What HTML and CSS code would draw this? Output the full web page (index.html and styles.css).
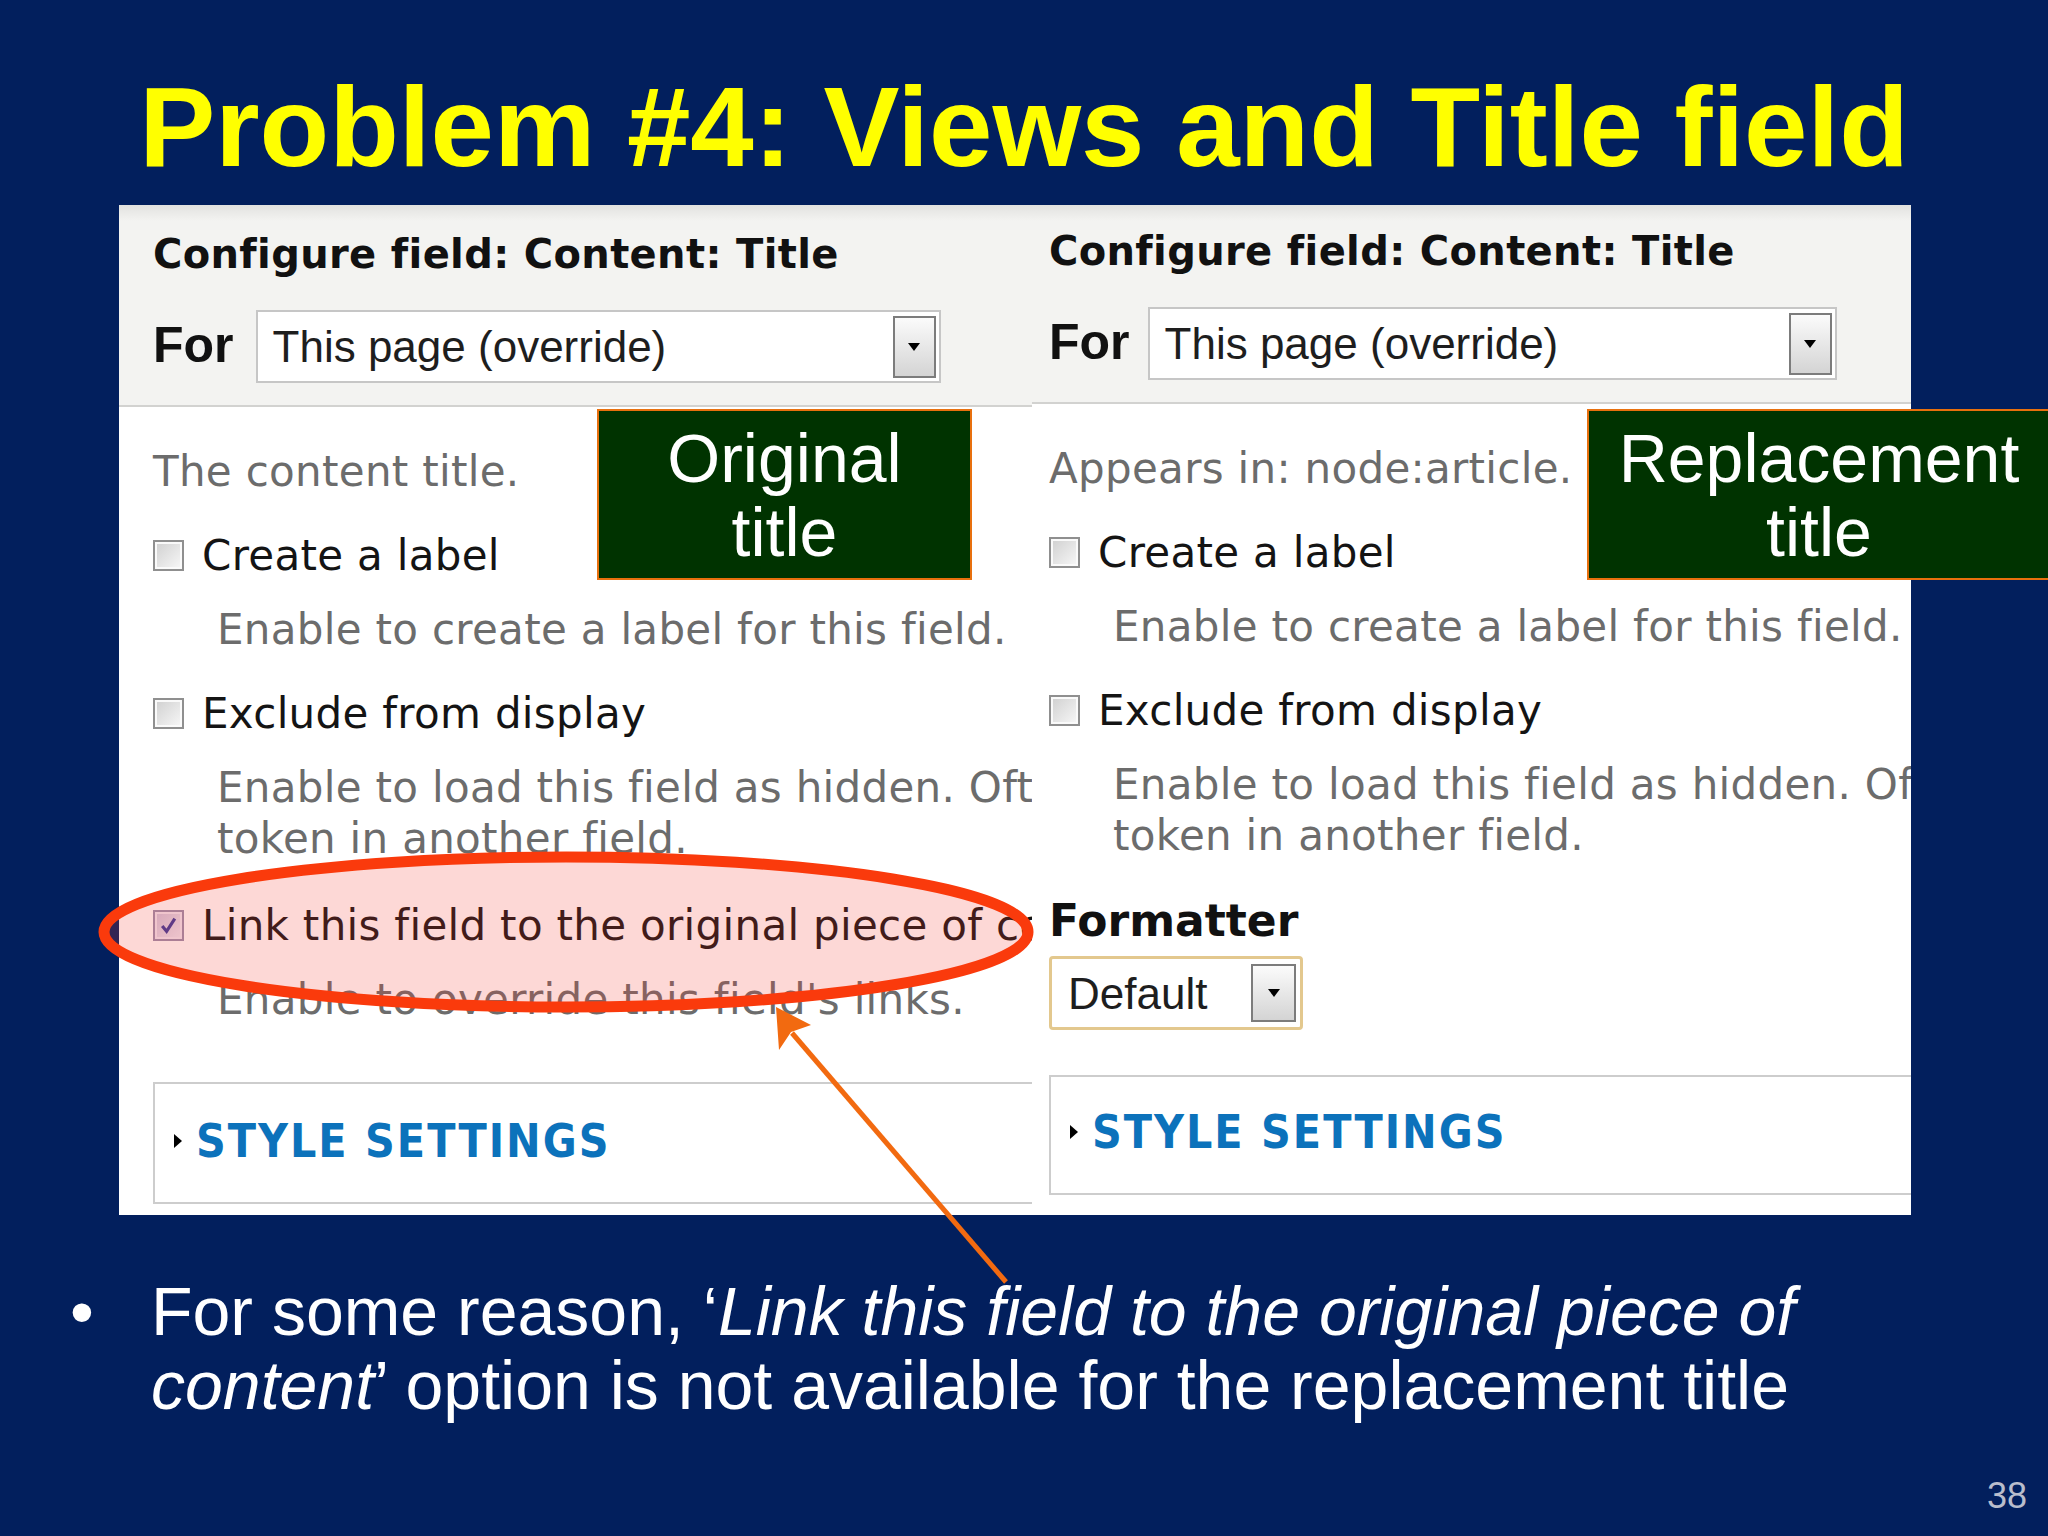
FILE: index.html
```html
<!DOCTYPE html>
<html lang="en">
<head>
<meta charset="utf-8">
<title>Problem #4: Views and Title field</title>
<link rel="stylesheet" href="styles.css">
</head>
<body>
<div class="slide">
  <h1 class="title">Problem #4: Views and Title field</h1>

  <div class="shot">
    <section class="col col-left">
      <header class="cfg-head">
        <div class="cfg-title">Configure field: Content: Title</div>
        <div class="for-row">
          <span class="for-label">For</span>
          <div class="select select-for">
            <span class="select-text">This page (override)</span>
            <span class="select-btn"><i class="tri-down"></i></span>
          </div>
        </div>
      </header>
      <div class="cfg-body">
        <p class="desc desc-first">The content title.</p>
        <div class="check-row"><span class="cb"></span><span>Create a label</span></div>
        <p class="desc desc-indent">Enable to create a label for this field.</p>
        <div class="check-row"><span class="cb"></span><span>Exclude from display</span></div>
        <p class="desc desc-indent">Enable to load this field as hidden. Often used to group fields, or to use as a<br>token in another field.</p>
        <div class="check-row check-link">
          <span class="cb cb-checked"><svg class="tick" viewBox="0 0 20 20"><path d="M4 10.5 L8.2 15.5 L16 3.5" fill="none" stroke="#3a3a9c" stroke-width="3"/></svg></span>
          <span>Link this field to the original piece of content</span>
        </div>
        <p class="desc desc-indent">Enable to override this field's links.</p>
        <div class="style-box"><i class="tri-right"></i><span class="style-text">STYLE SETTINGS</span></div>
      </div>
    </section>

    <section class="col col-right">
      <header class="cfg-head">
        <div class="cfg-title">Configure field: Content: Title</div>
        <div class="for-row">
          <span class="for-label">For</span>
          <div class="select select-for">
            <span class="select-text">This page (override)</span>
            <span class="select-btn"><i class="tri-down"></i></span>
          </div>
        </div>
      </header>
      <div class="cfg-body">
        <p class="desc desc-first">Appears in: node:article.</p>
        <div class="check-row"><span class="cb"></span><span>Create a label</span></div>
        <p class="desc desc-indent">Enable to create a label for this field.</p>
        <div class="check-row"><span class="cb"></span><span>Exclude from display</span></div>
        <p class="desc desc-indent">Enable to load this field as hidden. Often used to group fields, or to use as a<br>token in another field.</p>
        <div class="fmt-label">Formatter</div>
        <div class="select select-fmt">
          <span class="select-text">Default</span>
          <span class="select-btn select-btn-fmt"><i class="tri-down"></i></span>
        </div>
        <div class="style-box style-box-right"><i class="tri-right"></i><span class="style-text">STYLE SETTINGS</span></div>
      </div>
    </section>
  </div>

  <div class="callout callout-orig">Original<br>title</div>
  <div class="callout callout-repl">Replacement<br>title</div>

  <svg class="annot" width="2048" height="1536" viewBox="0 0 2048 1536">
    <ellipse cx="566" cy="932" rx="462" ry="75" fill="rgba(245,60,50,0.2)" stroke="#fa3a0c" stroke-width="11"/>
    <line x1="1006" y1="1282" x2="792" y2="1033" stroke="#f26a10" stroke-width="5"/>
    <polygon points="776,1007 811,1025 791,1032 779,1050" fill="#f26a10"/>
  </svg>

  <ul class="bullets">
    <li>For some reason, ‘<em>Link this field to the original piece of<br>content</em>’ option is not available for the replacement title</li>
  </ul>

  <div class="page-num">38</div>
</div>
</body>
</html>
```

FILE: styles.css
```css
* { box-sizing: border-box; }

html, body {
  margin: 0;
  padding: 0;
}

body {
  width: 2048px;
  height: 1536px;
  overflow: hidden;
  background: #021f5d;
  font-family: "Liberation Sans", Arial, sans-serif;
}

.slide {
  position: relative;
  width: 2048px;
  height: 1536px;
  overflow: hidden;
  display: flex;
  flex-direction: column;
  padding-top: 62px;
  background: #021f5d;
}

.title {
  margin: 0;
  font: bold 114px/130px "Liberation Sans", Arial, sans-serif;
  color: #ffff00;
  text-align: center;
  white-space: nowrap;
}

/* ---------- screenshot panel ---------- */
.shot {
  margin: 13px 0 0 119px;
  width: 1792px;
  height: 1010px;
  flex: none;
  display: flex;
  background: #fff;
}

.col {
  height: 100%;
  overflow: hidden;
  background: #fff;
  font-family: "DejaVu Sans", Verdana, sans-serif;
}

.col-left { width: 913px; }
.col-right { width: 879px; }

.cfg-head {
  height: 202px;
  padding: 25px 0 0 34px;
  background: linear-gradient(#e2e2e0, #f3f3f1 16px);
  border-bottom: 2px solid #d2d2d0;
}

.col-right .cfg-head {
  height: 199px;
  padding: 22px 0 0 17px;
}

.cfg-title {
  font-weight: bold;
  font-size: 40px;
  line-height: 48px;
  letter-spacing: 0.35px;
  color: #111;
  white-space: nowrap;
}

.for-row {
  display: flex;
  align-items: baseline;
  gap: 22px;
  margin-top: 32px;
}

.col-right .for-row { gap: 18px; }

.for-label {
  font: bold 50px/50px "Liberation Sans", Arial, sans-serif;
  color: #111;
}

.select {
  display: flex;
  align-items: center;
  justify-content: space-between;
  background: #fff;
  font: 44px/69px "Liberation Sans", Arial, sans-serif;
  color: #1e1e1e;
  white-space: nowrap;
}

.select-for {
  width: 685px;
  height: 73px;
  border: 2px solid #c6c6c6;
  padding: 0 3px 0 15px;
}

.col-right .select-for { width: 689px; }

.select-btn {
  flex: none;
  width: 43px;
  height: 62px;
  border: 2px solid #7c7c7c;
  background: linear-gradient(#fbfbfb, #d4d4d4);
  display: flex;
  align-items: center;
  justify-content: center;
}

.tri-down {
  display: block;
  width: 0;
  height: 0;
  border-left: 6px solid transparent;
  border-right: 6px solid transparent;
  border-top: 8px solid #000;
}

.cfg-body { padding-left: 34px; }
.col-right .cfg-body { padding-left: 17px; }

.desc {
  margin: 0;
  font-size: 42px;
  line-height: 51px;
  letter-spacing: 0.3px;
  color: #6c6c6c;
  white-space: nowrap;
}

.desc-first { margin-top: 39px; }

.desc-indent {
  margin-left: 64px;
  margin-top: 23px;
}

.check-row {
  display: flex;
  align-items: center;
  gap: 18px;
  margin-top: 33px;
  font-size: 42px;
  line-height: 51px;
  letter-spacing: 0.3px;
  color: #141414;
  white-space: nowrap;
}

.check-link { margin-top: 36px; }

.cb {
  flex: none;
  width: 31px;
  height: 31px;
  border: 2px solid #8f8f8f;
  box-shadow: inset 0 0 0 2px #fafafa;
  background: linear-gradient(135deg, #cfcfcf, #f8f8f8);
  display: flex;
  align-items: center;
  justify-content: center;
}

.cb-checked {
  border-color: #9a8fae;
  box-shadow: inset 0 0 0 2px #efe8f4;
  background: linear-gradient(135deg, #cfc3dc, #eee8f3);
}

.tick {
  width: 21px;
  height: 21px;
}

.fmt-label {
  margin-top: 34px;
  font-weight: bold;
  font-size: 44px;
  line-height: 52px;
  color: #111;
}

.select-fmt {
  margin-top: 9px;
  width: 254px;
  height: 74px;
  border: 3px solid #e3c88e;
  border-radius: 4px;
  padding: 0 4px 0 16px;
}

.select-btn-fmt {
  width: 45px;
  height: 58px;
}

.style-box {
  margin-top: 57px;
  margin-right: -30px;
  height: 122px;
  border: 2px solid #cdcdcd;
  display: flex;
  align-items: center;
  gap: 14px;
  padding: 0 0 4px 19px;
}

.style-box-right {
  margin-top: 45px;
  height: 120px;
  padding-bottom: 6px;
}

.tri-right {
  display: block;
  flex: none;
  width: 0;
  height: 0;
  border-top: 7px solid transparent;
  border-bottom: 7px solid transparent;
  border-left: 8px solid #000;
}

.style-text {
  font-family: "DejaVu Sans Condensed", "DejaVu Sans", sans-serif;
  font-weight: bold;
  font-size: 46px;
  line-height: 54px;
  letter-spacing: 2px;
  color: #0c72bb;
  white-space: nowrap;
}

/* ---------- overlays ---------- */
.callout {
  position: absolute;
  top: 409px;
  height: 171px;
  background: #003300;
  border: 2px solid #e8700e;
  color: #fff;
  font: 68px/74px "Liberation Sans", Arial, sans-serif;
  display: flex;
  align-items: center;
  justify-content: center;
  text-align: center;
}

.callout-orig {
  left: 597px;
  width: 375px;
}

.callout-repl {
  left: 1587px;
  width: 464px;
}

.annot {
  position: absolute;
  left: 0;
  top: 0;
  pointer-events: none;
}

/* ---------- bullet ---------- */
.bullets {
  list-style: none;
  margin: 59px 0 0 0;
  padding: 0 0 0 70px;
  color: #fff;
  font: 68px/74px "Liberation Sans", Arial, sans-serif;
}

.bullets li {
  padding-left: 81px;
  text-indent: -81px;
}

.bullets li::before {
  content: "•";
  display: inline-block;
  width: 81px;
  text-indent: 0;
}

.bullets em { font-style: italic; }

.page-num {
  margin-top: auto;
  align-self: flex-end;
  padding: 0 21px 20px 0;
  font: 36px/40px "Liberation Sans", Arial, sans-serif;
  color: #b9bdcc;
}
```
